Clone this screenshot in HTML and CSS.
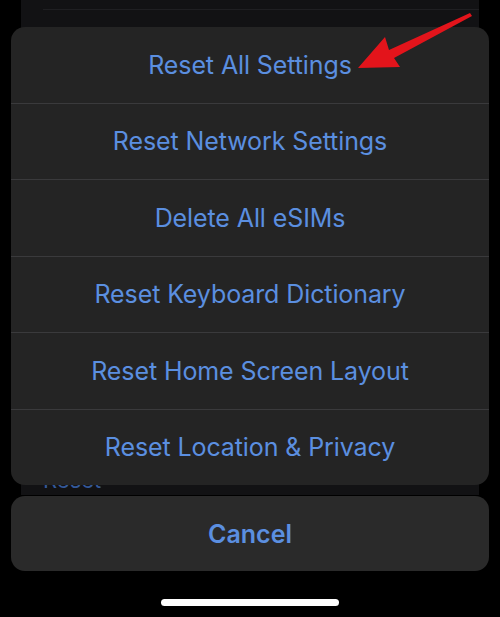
FILE: index.html
```html
<!DOCTYPE html>
<html lang="en">
<head>
    <meta charset="UTF-8">
    <meta name="viewport" content="width=device-width, initial-scale=1.0">
    <title>Reset</title>
    <link rel="stylesheet" href="styles.css">
</head>
<body>
    <div class="screen">
        <!-- settings list behind the sheet -->
        <div class="list">
            <div class="list-row"></div>
            <div class="list-row last"><span>Reset</span></div>
        </div>

        <div class="sheet">
            <div class="actions">
                <div class="action">Reset All Settings</div>
                <div class="action">Reset Network Settings</div>
                <div class="action">Delete All eSIMs</div>
                <div class="action">Reset Keyboard Dictionary</div>
                <div class="action">Reset Home Screen Layout</div>
                <div class="action">Reset Location &amp; Privacy</div>
            </div>
            <div class="cancel">Cancel</div>
        </div>

        <div class="home-bar"></div>

        <svg class="arrow" width="130" height="70" viewBox="0 0 130 70">
            <polygon points="120,7 122,10 44,52 50,61 8,62 35,31 39,44" fill="#e3141b"/>
        </svg>
    </div>
</body>
</html>
```

FILE: styles.css
```css
*{padding:0; margin:0; box-sizing:border-box;}

html{
    font-family:Inter, "Liberation Sans", sans-serif;
    background:#000;
}
body{background:#000;}

.screen{
    position:relative;
    width:500px;
    height:617px;
    overflow:hidden;
}

/* list in the background */
.list{
    margin:0 21px;
    height:495px;
    background:#121214;
    display:flex;
    flex-direction:column;
    justify-content:space-between;
}
.list-row{
    height:10px;
    border-bottom:1px solid #1f1f22;
    margin-left:22px;
}
.list-row.last{
    height:auto;
    border:none;
    padding-bottom:3px;
}
.list-row.last span{
    font-size:22px;
    color:#34599a;
    line-height:1;
}

/* action sheet */
.sheet{
    position:absolute;
    left:11px;
    right:11px;
    top:27px;
    display:flex;
    flex-direction:column;
    gap:11px;
}
.actions{
    height:458px;
    background:#242424;
    border-radius:14px;
    display:flex;
    flex-direction:column;
    overflow:hidden;
}
.action{
    flex:1 1 0;
    display:flex;
    align-items:center;
    justify-content:center;
    font-size:25px;
    color:#5b8fe0;
    letter-spacing:-0.1px;
    border-top:1px solid #3a3a3c;
}
.action:first-child{border-top:none;}

.cancel{
    height:75px;
    background:#2a2a2a;
    border-radius:14px;
    display:flex;
    align-items:center;
    justify-content:center;
    font-size:25px;
    font-weight:600;
    color:#5b8fe0;
}

.home-bar{
    position:absolute;
    left:161px;
    top:599px;
    width:178px;
    height:7px;
    border-radius:4px;
    background:#fff;
}

.arrow{
    position:absolute;
    left:350px;
    top:6px;
}
```
